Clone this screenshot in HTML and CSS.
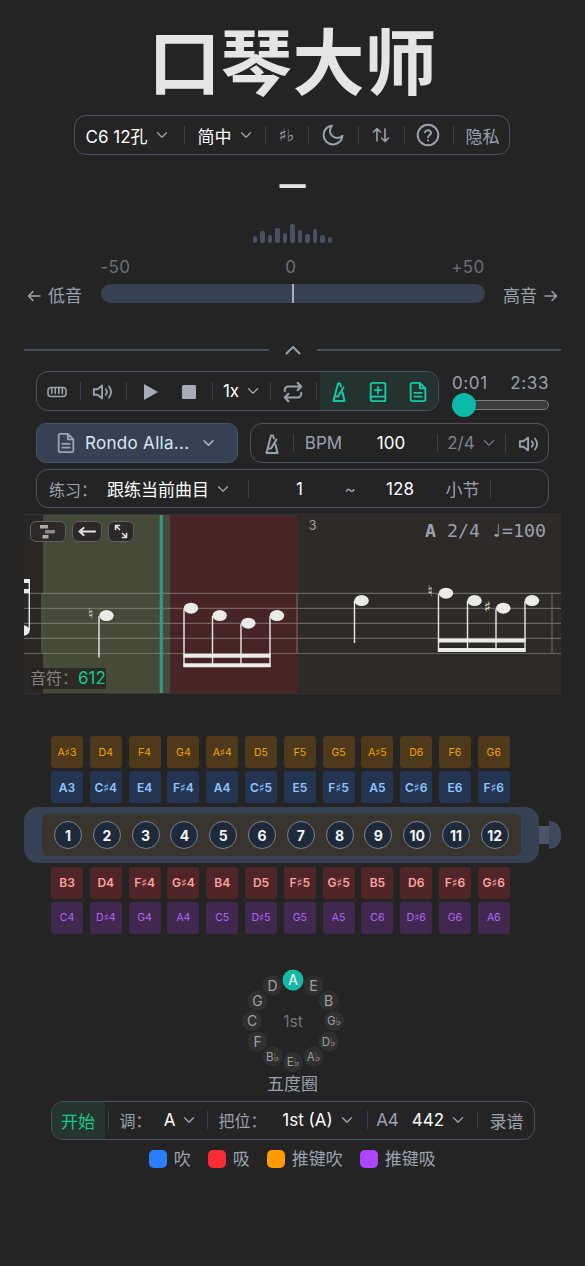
FILE: index.html
```html
<!DOCTYPE html>
<html lang="zh-CN">
<head>
    <meta charset="UTF-8">
    <meta name="viewport" content="width=device-width, initial-scale=1.0">
    <title>口琴大师</title>
    <link rel="stylesheet" href="styles.css">
</head>
<body>

    <!-- Shared icons -->
    <svg class="icon-defs" width="0" height="0">
        <symbol id="i-down" viewBox="0 0 12 8"><path d="M1.500 1.800 6 6.200l4.500-4.400"/></symbol>
        <symbol id="i-volume" viewBox="0 0 24 24"><path d="M2 9h4l5-4v14l-5-4H2zM15 9a4.500 4.500 0 0 1 0 6M18.500 6a9 9 0 0 1 0 12"/></symbol>
        <symbol id="i-metronome" viewBox="0 0 16 22"><path d="M10 5.500 9 2.500H7L2.500 20h11L11.500 11.500M4.500 15.500 7 15.500 12.500 6.500"/></symbol>
        <symbol id="i-file" viewBox="0 0 24 24"><path d="M14 2H6a2 2 0 0 0-2 2v16a2 2 0 0 0 2 2h12a2 2 0 0 0 2-2V8zM14 2v6h6M8 13h8M8 17h8"/></symbol>
    </svg>

    <h1>口琴大师</h1>

    <div class="bar top-bar">
        <div class="cell strong top-key">C6 12孔 <svg class="down"><use href="#i-down"/></svg></div>
        <div class="cell strong top-lang">简中 <svg class="down"><use href="#i-down"/></svg></div>
        <div class="cell accidental">♯♭</div>
        <div class="cell"><svg class="icon" width="24" height="24" viewBox="0 0 24 24"><path d="M11 2.500a7 7 0 0 0 10.500 10.300A9.500 9.500 0 1 1 11 2.500z"/></svg></div>
        <div class="cell"><svg class="icon thin" width="18" height="18" viewBox="0 0 18 18"><path d="M5 15V2.500M1.500 6 5 2.500 8.500 6M13 3v12.500M9.500 12l3.500 3.500 3.500-3.500"/></svg></div>
        <div class="cell help"><svg class="icon" width="24" height="24" viewBox="0 0 24 24"><circle cx="12" cy="12" r="10.300"/><path d="M9 9.200a3.100 3.100 0 0 1 6 .9c0 2-3 2.300-3 4.200M12 17.300v.2"/></svg></div>
        <div class="cell top-privacy">隐私</div>
    </div>

    <!-- Tuner -->
    <div class="note">—</div>
    <div class="levels">
        <span class="h7"></span><span class="h12"></span><span class="h8"></span><span class="h15"></span><span class="h10"></span><span class="h19"></span><span class="h13"></span><span class="h9"></span><span class="h14"></span><span class="h8"></span><span class="h6"></span>
    </div>
    <div class="tuner">
        <div class="side low"><svg class="icon thin" width="14" height="12" viewBox="0 0 14 12"><path d="M13 6H1.500M6 1.500 1.500 6 6 10.500"/></svg>低音</div>
        <div class="meter">
            <div class="scale"><span>-50</span><span>0</span><span>+50</span></div>
            <div class="track"><span class="needle"></span></div>
        </div>
        <div class="side high">高音<svg class="icon thin" width="14" height="12" viewBox="0 0 14 12"><path d="M1 6h11.500M8 1.500 12.500 6 8 10.500"/></svg></div>
    </div>

    <div class="divider">
        <span></span>
        <svg class="icon" width="16" height="10" viewBox="0 0 16 10"><path d="M1.500 8.500 8 2l6.500 6.500"/></svg>
        <span></span>
    </div>

    <!-- Player -->
    <div class="row player-row">
        <div class="bar player-bar">
            <div class="cell view"><svg class="icon thin" width="20" height="12" viewBox="0 0 20 12"><rect x="1" y="1.500" width="18" height="9" rx="3"/><path d="M4.700 2v5.500M8.200 2v5.500M11.800 2v5.500M15.300 2v5.500"/></svg></div>
            <div class="cell"><svg class="icon" width="22" height="22"><use href="#i-volume"/></svg></div>
            <div class="cell"><svg class="solid" width="16" height="18" viewBox="0 0 16 18"><path d="M1 1v16l14-8z"/></svg></div>
            <div class="cell plain stop"><svg class="solid" width="14" height="14" viewBox="0 0 14 14"><rect width="14" height="14" rx="1.500"/></svg></div>
            <div class="cell strong">1x <svg class="down"><use href="#i-down"/></svg></div>
            <div class="cell"><svg class="icon bold" width="22" height="22" viewBox="0 0 24 24"><path d="m17 2 4 4-4 4M3 11v-1a4 4 0 0 1 4-4h14M7 22l-4-4 4-4M21 13v1a4 4 0 0 1-4 4H3"/></svg></div>
            <div class="cell active first"><svg class="icon" width="16" height="22"><use href="#i-metronome"/></svg></div>
            <div class="cell active plain"><svg class="icon" width="22" height="22" viewBox="0 0 24 24"><path d="M20 17V3.500A1.500 1.500 0 0 0 18.500 2h-12A2.500 2.500 0 0 0 4 4.500v15A2.500 2.500 0 0 0 6.500 22H20v-5H6.500A2.500 2.500 0 0 0 4 19.500M12 6.500v7M8.500 10h7"/></svg></div>
            <div class="cell active plain last"><svg class="icon" width="22" height="22"><use href="#i-file"/></svg></div>
        </div>
        <div class="progress">
            <div class="times"><span>0:01</span><span>2:33</span></div>
            <div class="slider"><span></span></div>
        </div>
    </div>

    <div class="row">
        <div class="song">
            <svg class="icon" width="22" height="22"><use href="#i-file"/></svg>
            <span>Rondo Alla...</span>
            <svg class="down"><use href="#i-down"/></svg>
        </div>
        <div class="bar tempo-bar">
            <div class="cell"><svg class="icon" width="16" height="22"><use href="#i-metronome"/></svg></div>
            <div class="cell">BPM</div>
            <div class="cell strong plain bpm">100</div>
            <div class="cell dim">2/4 <svg class="down"><use href="#i-down"/></svg></div>
            <div class="cell click"><svg class="icon" width="22" height="22"><use href="#i-volume"/></svg></div>
        </div>
    </div>

    <div class="bar practice-bar">
        <div class="cell label">练习：</div>
        <div class="cell strong plain mode">跟练当前曲目 <svg class="down"><use href="#i-down"/></svg></div>
        <div class="cell strong from">1</div>
        <div class="cell plain">~</div>
        <div class="cell strong plain">128</div>
        <div class="cell plain unit">小节</div>
        <div class="cell"></div>
    </div>

    <!-- Score -->
    <div class="score">
        <svg class="sheet" width="537" height="180" viewBox="24 514 537 180">
            <rect class="past" x="24" y="514" width="19" height="180"/>
            <rect class="m-green" x="43" y="514" width="127" height="180"/>
            <rect class="m-red" x="170" y="514" width="128" height="180"/>
            <path class="staff" d="M24 593.300h537M24 608.300h537M24 623.400h537M24 638.400h537M24 653.500h537M42 593v60.500M297 593v60.500M552 593v60.500"/>
            <rect class="cursor" x="159.700" y="514" width="3.200" height="180"/>
            <g class="stems">
                <path d="M29.300 579v51M99 616v41.500M184 609v58M212.500 616v51M241 624v43M270 616v51M354.500 601v42M438.500 594v58M467.500 601v51M496 609v43M525 601v51"/>
            </g>
            <g class="ink">
                <path d="M24 579h6v4h-6zM24 589h6v4h-6zM183.500 653.700h87v4h-87zM183.500 663.200h87v4h-87zM438 638.500h87.500v4H438zM438 648h87.500v4H438z"/>
                <ellipse cx="22.500" cy="630.500" rx="7.200" ry="5.400"/>
                <ellipse cx="106.500" cy="615.600" rx="7.200" ry="5.500"/>
                <ellipse cx="191" cy="608.200" rx="7.200" ry="5.500"/>
                <ellipse cx="219.700" cy="615.600" rx="7.200" ry="5.500"/>
                <ellipse cx="248.300" cy="623.200" rx="7.200" ry="5.500"/>
                <ellipse cx="277" cy="615.600" rx="7.200" ry="5.500"/>
                <ellipse cx="361.600" cy="600.600" rx="7.200" ry="5.500"/>
                <ellipse cx="446" cy="593.200" rx="7.200" ry="5.500"/>
                <ellipse cx="474.600" cy="600.600" rx="7.200" ry="5.500"/>
                <ellipse cx="503.300" cy="608.200" rx="7.200" ry="5.500"/>
                <ellipse cx="532" cy="600.600" rx="7.200" ry="5.500"/>
            </g>
            <g class="signs">
                <text x="90.700" y="619">♮</text>
                <text x="430.300" y="596.300">♮</text>
                <text x="487.300" y="612">♯</text>
            </g>
            <text class="measure" x="312.500" y="530">3</text>
        </svg>
        <div class="tools">
            <span class="tool t1"><svg width="16" height="14" viewBox="0 0 16 14"><path fill="#aaa" d="M0 0h8v3.500H0zM2.500 10h6v3.500h-6z"/><path fill="#888" d="M5 5h10v3.500H5z"/></svg></span>
            <span class="tool t2"><svg class="icon" width="18" height="9" viewBox="0 0 18 9"><path d="M17 4.500H1.500M5.500 1l-4 3.500 4 3.500"/></svg></span>
            <span class="tool t3"><svg class="icon thin" width="14" height="15" viewBox="0 0 14 15"><path d="M5.500 1.500h-4v4M1.500 1.500l4 4M8.500 13.500h4v-4M12.500 13.500l-4-4"/></svg></span>
        </div>
        <div class="score-info"><b>A</b> 2/4 ♩=100</div>
        <div class="note-count">音符：<span>612</span></div>
    </div>

    <!-- Harmonica -->
    <div class="harmonica">
        <div class="keys push-blow">
            <span>A♯3</span><span>D4</span><span>F4</span><span>G4</span><span>A♯4</span><span>D5</span><span>F5</span><span>G5</span><span>A♯5</span><span>D6</span><span>F6</span><span>G6</span>
        </div>
        <div class="keys blow">
            <span>A3</span><span>C♯4</span><span>E4</span><span>F♯4</span><span>A4</span><span>C♯5</span><span>E5</span><span>F♯5</span><span>A5</span><span>C♯6</span><span>E6</span><span>F♯6</span>
        </div>
        <div class="body-row">
            <div class="shell">
                <div class="holes">
                    <span>1</span><span>2</span><span>3</span><span>4</span><span>5</span><span>6</span><span>7</span><span>8</span><span>9</span><span>10</span><span>11</span><span>12</span>
                </div>
            </div>
            <span class="rod"></span>
            <span class="knob"></span>
        </div>
        <div class="keys draw">
            <span>B3</span><span>D4</span><span>F♯4</span><span>G♯4</span><span>B4</span><span>D5</span><span>F♯5</span><span>G♯5</span><span>B5</span><span>D6</span><span>F♯6</span><span>G♯6</span>
        </div>
        <div class="keys push-draw">
            <span>C4</span><span>D♯4</span><span>G4</span><span>A4</span><span>C5</span><span>D♯5</span><span>G5</span><span>A5</span><span>C6</span><span>D♯6</span><span>G6</span><span>A6</span>
        </div>
    </div>

    <!-- Circle of fifths -->
    <svg class="fifths" width="106" height="106" viewBox="-53 -53 106 106">
        <g class="nodes">
            <circle class="on" cy="-41" r="10.500"/>
            <circle cx="20.500" cy="-35.500" r="10"/><circle cx="35.500" cy="-20.500" r="10"/>
            <circle cx="41" r="10"/><circle cx="35.500" cy="20.500" r="10"/>
            <circle cx="20.500" cy="35.500" r="10"/><circle cy="41" r="10"/>
            <circle cx="-20.500" cy="35.500" r="10"/><circle cx="-35.500" cy="20.500" r="10"/>
            <circle cx="-41" r="10"/><circle cx="-35.500" cy="-20.500" r="10"/>
            <circle cx="-20.500" cy="-35.500" r="10"/>
        </g>
        <g class="names">
            <text class="on" x="0" y="-36">A</text>
            <text x="20.500" y="-30.500">E</text>
            <text x="35.500" y="-15.500">B</text>
            <text class="flat" x="41" y="4">G♭</text>
            <text class="flat" x="35.500" y="24.500">D♭</text>
            <text class="flat" x="20.500" y="39.500">A♭</text>
            <text class="flat" x="0" y="45">E♭</text>
            <text class="flat" x="-20.500" y="39.500">B♭</text>
            <text x="-35.500" y="25.500">F</text>
            <text x="-41" y="5">C</text>
            <text x="-35.500" y="-15.500">G</text>
            <text x="-20.500" y="-30.500">D</text>
            <text class="pos" x="0" y="6">1st</text>
        </g>
    </svg>
    <div class="fifths-title">五度圈</div>

    <div class="bar bottom-bar">
        <div class="cell start">开始</div>
        <div class="cell label">调：</div>
        <div class="cell strong plain">A <svg class="down"><use href="#i-down"/></svg></div>
        <div class="cell label">把位：</div>
        <div class="cell strong plain">1st (A) <svg class="down"><use href="#i-down"/></svg></div>
        <div class="cell">A4</div>
        <div class="cell strong plain pitch">442 <svg class="down"><use href="#i-down"/></svg></div>
        <div class="cell record">录谱</div>
    </div>

    <div class="legend">
        <span class="c-blow">吹</span>
        <span class="c-draw">吸</span>
        <span class="c-push-blow">推键吹</span>
        <span class="c-push-draw">推键吸</span>
    </div>

</body>
</html>
```
FILE: styles.css
```css
* {
    box-sizing: border-box;
}

body {
    margin: 0;
    width: 585px;
    height: 1266px;
    overflow: hidden;
    background-color: #242424;
    color: #99a1af;
    font-family: Inter, "DejaVu Sans", "Noto Sans CJK SC", sans-serif;
    font-size: 17px;
}

.icon-defs {
    display: block;
}

h1 {
    margin: 22px 0 0;
    height: 82px;
    line-height: 82px;
    font-family: Inter, "Noto Sans CJK SC", sans-serif;
    font-size: 72px;
    font-weight: 700;
    text-align: center;
    color: #e5e5e5;
}

/* Icons */
.icon,
.down {
    fill: none;
    stroke: currentColor;
    stroke-width: 2;
    stroke-linecap: round;
    stroke-linejoin: round;
    flex: none;
}

.icon.thin {
    stroke-width: 1.6;
}

.icon.bold {
    stroke-width: 2.3;
}

.down {
    width: 12px;
    height: 8px;
    stroke: #99a1af;
    stroke-width: 1.4;
}

.solid {
    fill: #a6acba;
}

/* Toolbars */
.bar {
    display: grid;
    height: 39px;
    border: 1.5px solid #4a5265;
    border-radius: 12px;
}

.cell {
    position: relative;
    display: flex;
    align-items: center;
    justify-content: center;
    gap: 8px;
    white-space: nowrap;
}

/* Thin separator before each cell */
.cell::before {
    content: "";
    position: absolute;
    left: 0;
    top: 50%;
    width: 1px;
    height: 18px;
    margin-top: -9px;
    background-color: #364153;
}

.cell:first-child::before,
.cell.plain::before {
    display: none;
}

.strong {
    color: #fff;
}

.dim {
    color: #7d828c;
}

.dim .down {
    stroke: #6a7282;
}

.cell.label {
    justify-content: flex-start;
    padding-left: 12px;
    font-size: 16px;
}

.top-bar {
    width: 436px;
    height: 40px;
    margin: 11px 0 0 74px;
    grid-template-columns: 109px 81px 43px 50px 46px 49px 1fr;
}

.top-key {
    padding-right: 6px;
}

.help {
    padding-right: 2px;
}

.top-privacy {
    padding-left: 3px;
}

.accidental {
    font-size: 17px;
}

/* Tuner */
.note {
    height: 30px;
    margin-top: 15px;
    line-height: 30px;
    font-size: 26px;
    font-weight: 900;
    text-align: center;
    color: #e5e5e5;
}

.levels {
    display: flex;
    justify-content: center;
    align-items: flex-end;
    gap: 3px;
    height: 19px;
    margin-top: 24px;
}

.levels span {
    width: 4.5px;
    border-radius: 2px;
    background-color: #4a5164;
}

.h6 { height: 6px; }
.h7 { height: 7px; }
.h8 { height: 8px; }
.h9 { height: 9px; }
.h10 { height: 10px; }
.h12 { height: 12px; }
.h13 { height: 13px; }
.h14 { height: 14px; }
.h15 { height: 15px; }
.h19 { height: 19px; }

.tuner {
    display: flex;
    justify-content: space-between;
    width: 531px;
    height: 46px;
    margin: 14px 0 0 27px;
}

.side {
    display: flex;
    align-items: center;
    gap: 7px;
    height: 24px;
    margin-top: 27px;
    line-height: 20px;
}

.meter {
    width: 384px;
}

.scale {
    display: flex;
    justify-content: space-between;
    height: 27px;
    line-height: 21px;
    letter-spacing: .3px;
    color: #6c6f75;
}

.track {
    display: flex;
    justify-content: center;
    height: 19px;
    border-radius: 10px;
    background-color: #364153;
}

.needle {
    width: 1.5px;
    margin-left: 1px;
    background-color: #a6b0c0;
}

.divider {
    display: flex;
    align-items: center;
    justify-content: space-between;
    width: 537px;
    height: 12px;
    margin: 41px 0 0 24px;
}

.divider span {
    width: 244.5px;
    height: 1.5px;
    background-color: #454d5a;
}

/* Player */
.row {
    display: flex;
    width: 513px;
    margin: 12px 0 0 36px;
}

.player-row {
    margin-top: 15px;
}

.player-bar {
    width: 403px;
    height: 40px;
    grid-template-columns: 43px 46px 50px 36px 58px 46px 42px 39px 1fr;
    overflow: hidden;
}

.player-bar .icon,
.player-bar .solid {
    margin-top: 2px;
}

.view {
    padding-right: 4px;
}

.stop {
    padding-right: 11px;
}

.active {
    color: #14c9a8;
    background-color: #24332f;
}

.active.first {
    margin-left: 4px;
}

.active.first::before {
    left: -4px;
}

.progress {
    width: 97px;
    margin-left: 13px;
}

.times {
    display: flex;
    justify-content: space-between;
    height: 29px;
    line-height: 25px;
    letter-spacing: .6px;
}

.slider {
    display: flex;
    align-items: center;
    height: 10px;
    margin-left: 1px;
    border: 1.5px solid #7c7c7c;
    border-radius: 5px;
    background-color: #3b3b3b;
}

.slider span {
    width: 24px;
    height: 24px;
    flex: none;
    margin-left: -2px;
    border-radius: 50%;
    background-color: #0bbba7;
}

.song {
    display: flex;
    align-items: center;
    width: 202px;
    height: 40px;
    padding-left: 18px;
    border: 1.5px solid #45556c;
    border-radius: 10px;
    background-color: #364153;
    color: #d9e6f5;
}

.song .icon {
    color: #99a5b8;
}

.song span {
    width: 105px;
    margin: 0 12px 0 8px;
    letter-spacing: .3px;
    white-space: nowrap;
}

.song .down {
    width: 13px;
    stroke: #b4c0d0;
}

.tempo-bar {
    width: 299px;
    height: 40px;
    margin-left: 12px;
    grid-template-columns: 42px 61px 83px 68px 1fr;
}

.tempo-bar .icon {
    margin-top: 2px;
}

.bpm {
    padding-right: 9px;
}

.click {
    padding-left: 4px;
}

.practice-bar {
    width: 513px;
    margin: 6px 0 0 36px;
    grid-template-columns: 55px 156px 90px 24px 76px 52px 1fr;
}

.mode {
    padding-right: 4px;
}

.from {
    padding-left: 13px;
}

.unit {
    padding-right: 3px;
}

/* Score */
.score {
    position: relative;
    width: 537px;
    height: 180px;
    margin: 6px 0 0 24px;
    border: solid #34353a;
    border-width: 1.5px 0;
    background-color: #2e2a27;
    overflow: hidden;
}

.sheet {
    display: block;
    margin-top: -1.5px;
}

.past { fill: #292624; }
.m-green { fill: #464a39; }
.m-red { fill: #462524; }
.cursor { fill: #3a9582; }

.staff {
    fill: none;
    stroke: #98988f;
    stroke-opacity: .55;
    stroke-width: 1.2;
}

.stems {
    stroke: #e8e8e6;
    stroke-width: 1.4;
}

.ink {
    fill: #ecebe9;
}

.signs {
    font-family: "DejaVu Sans";
    font-size: 15px;
    text-anchor: middle;
    fill: #e0e0da;
}

.measure {
    font-size: 13px;
    text-anchor: middle;
    fill: #99a19f;
}

.tools {
    position: absolute;
    left: 6px;
    top: 6px;
    display: flex;
    gap: 6px;
}

.tool {
    display: flex;
    align-items: center;
    justify-content: center;
    height: 21px;
    border: 1.2px solid #626166;
    border-radius: 6px;
    background-color: #2c2928;
    color: #e2e2e2;
}

.t1 { width: 36px; }
.t2 { width: 30px; }
.t3 { width: 26px; }

.score-info {
    position: absolute;
    right: 15px;
    top: 5px;
    font-family: "DejaVu Sans Mono", monospace;
    font-size: 18.3px;
    white-space: pre;
}

.note-count {
    position: absolute;
    left: 6px;
    top: 153px;
    display: flex;
    height: 21px;
    line-height: 21px;
    font-size: 16px;
    color: #85837f;
    background-color: rgba(36, 34, 32, .8);
}

.note-count span {
    font-size: 17px;
    color: #12ca8b;
}

/* Harmonica */
.harmonica {
    width: 537px;
    margin: 42px 0 0 24px;
}

.keys {
    display: grid;
    grid-template-columns: repeat(12, 32px);
    gap: 6.8px;
    height: 32px;
    margin: 0 0 3px 27px;
}

.keys span {
    display: flex;
    align-items: center;
    justify-content: center;
    border-radius: 3px;
}

.push-blow,
.push-draw {
    font-size: 10.5px;
}

.blow,
.draw {
    font-size: 12px;
    font-weight: 600;
}

.push-blow span { background-color: #4e3a1b; color: #f0a500; }
.blow span { background-color: #243551; color: #8ec5ff; }
.draw span { background-color: #4f2527; color: #ffa2a2; }
.push-draw span { background-color: #41284f; color: #b268f5; }

.body-row {
    display: flex;
    align-items: center;
    height: 56px;
    margin: 4px 0 3.5px;
}

.shell {
    display: flex;
    align-items: center;
    width: 515px;
    height: 56px;
    padding-left: 18px;
    border-radius: 14px;
    background-color: #364153;
}

.holes {
    display: grid;
    grid-template-columns: repeat(12, 28px);
    gap: 10.8px;
    align-items: center;
    width: 479px;
    height: 42px;
    padding-left: 12px;
    border-radius: 6px;
    background-color: #3a342f;
}

.holes span {
    display: flex;
    align-items: center;
    justify-content: center;
    height: 28px;
    border: 1.5px solid #7b8391;
    border-radius: 50%;
    background-color: #1e2939;
    color: #f3f4f6;
    font-size: 14px;
    font-weight: 700;
}

.rod {
    width: 10px;
    height: 18px;
    background-color: #4a5565;
}

.knob {
    width: 12px;
    height: 28px;
    border-radius: 0 12px 12px 0;
    background-color: #3d495d;
}

/* Circle of fifths */
.fifths {
    display: block;
    margin: 34px auto 0;
}

.nodes circle {
    fill: #303030;
}

.nodes .on {
    fill: #14b8a6;
}

.names text {
    font-size: 14px;
    text-anchor: middle;
    fill: #a0a0a0;
}

.names .flat {
    font-size: 11.5px;
}

.names .on {
    fill: #fff;
}

.names .pos {
    font-size: 15.5px;
    fill: #737373;
}

.fifths-title {
    height: 22px;
    line-height: 22px;
    margin-top: -1px;
    text-align: center;
}

.bottom-bar {
    width: 484px;
    margin: 6px 0 0 50.5px;
    grid-template-columns: 56px 45px 54px 62px 98px 42px 68px 1fr;
    overflow: hidden;
}

.start {
    margin-right: 3px;
    color: #10cc88;
    background-color: #26352f;
}

.pitch {
    padding-right: 9px;
}

.record {
    padding-left: 3px;
}

.legend {
    display: flex;
    justify-content: center;
    gap: 17.5px;
    height: 24px;
    margin-top: 7px;
    line-height: 22px;
}

.legend span {
    display: flex;
    align-items: center;
    gap: 6.5px;
}

.legend span::before {
    content: "";
    width: 18px;
    height: 18px;
    border-radius: 5px;
}

.c-blow::before { background-color: #2b7fff; }
.c-draw::before { background-color: #fb2c36; }
.c-push-blow::before { background-color: #fe9a00; }
.c-push-draw::before { background-color: #ad46ff; }
```
